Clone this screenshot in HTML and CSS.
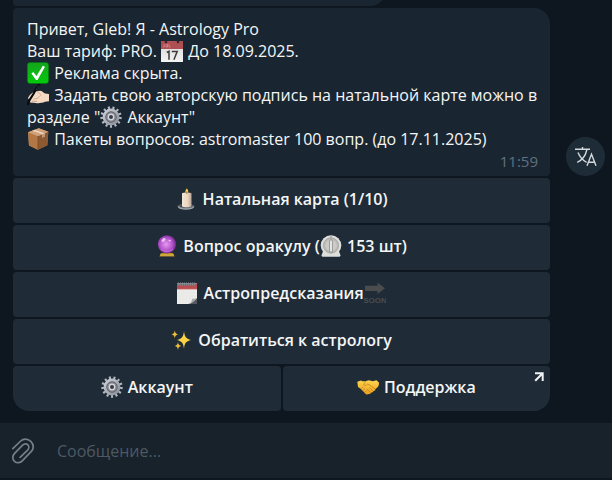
FILE: index.html
```html
<!DOCTYPE html>
<html lang="ru">

<head>
  <meta charset="UTF-8" />
  <title>Astrology Pro</title>
  <meta name="viewport" content="width=device-width, initial-scale=1.0" />
  <link rel="stylesheet" href="styles.css">
</head>

<body>

  <!-- shared icons -->
  <svg class="sprite" aria-hidden="true">
    <defs>
      <linearGradient id="gearFill" x1="0" y1="0" x2="1" y2="1">
        <stop offset="0" stop-color="#c9ced6" />
        <stop offset="1" stop-color="#8b8f99" />
      </linearGradient>
      <linearGradient id="paper" x1="0" y1="0" x2="0" y2="1">
        <stop offset="0" stop-color="#d5d5d5" />
        <stop offset="1" stop-color="#f4f4f4" />
      </linearGradient>
      <linearGradient id="check" x1="0" y1="0" x2="0" y2="1">
        <stop offset="0" stop-color="#14a51c" />
        <stop offset="1" stop-color="#04c90c" />
      </linearGradient>
      <linearGradient id="wax" x1="0" y1="0" x2="1" y2="0">
        <stop offset="0" stop-color="#f5e6d3" />
        <stop offset="0.6" stop-color="#ead5c0" />
        <stop offset="1" stop-color="#bba493" />
      </linearGradient>
      <radialGradient id="orb" cx="0.45" cy="0.5" r="0.55">
        <stop offset="0" stop-color="#e69af3" />
        <stop offset="0.65" stop-color="#b052c8" />
        <stop offset="1" stop-color="#702888" />
      </radialGradient>
      <linearGradient id="gold" x1="0" y1="0" x2="0" y2="1">
        <stop offset="0" stop-color="#ffd34e" />
        <stop offset="1" stop-color="#e9a01d" />
      </linearGradient>
    </defs>
    <symbol id="gear" viewBox="0 0 22 22">
      <circle cx="11" cy="11" r="9.3" fill="none" stroke="#b4b8c0" stroke-width="2.8" stroke-dasharray="2 2.495" />
      <circle cx="11" cy="11" r="6.8" fill="none" stroke="url(#gearFill)" stroke-width="3.2" />
      <circle cx="11" cy="11" r="5.3" fill="#85868f" />
      <circle cx="11" cy="11" r="5.3" fill="none" stroke="#5d616c" stroke-width="0.8" />
      <circle cx="11" cy="11" r="2.7" fill="#343b46" stroke="#d3d6dc" stroke-width="1.4" />
    </symbol>
  </svg>

  <main class="chat">
    <div class="message previous"></div>

    <div class="message-row">
      <article class="message bubble">
        <p>Привет, Gleb! Я - Astrology Pro</p>
        <p>Ваш тариф: PRO.
          <svg class="emoji" viewBox="0 0 22 22" aria-hidden="true">
            <rect x="0" y="1" width="22" height="21" rx="0.6" fill="url(#paper)" />
            <path d="M0 1h22v8H0z" fill="#ad4f53" />
            <path d="M1.8 7h1.4V4M5 4v3h1.5V4M8 4v3h1.5" fill="none" stroke="#d58b8d" stroke-width="0.8" />
            <circle cx="5" cy="2" r="1.3" fill="#3d2429" />
            <circle cx="17" cy="2" r="1.3" fill="#3d2429" />
            <path d="M5.8 12.5l2.2-1.3v8.600M10.800 11.500h5.400l-3.300 8.300" fill="none" stroke="#3c3c3e" stroke-width="1.5" />
          </svg>
          До 18.09.2025.</p>
        <p><svg class="emoji" viewBox="0 0 22 22" aria-hidden="true">
            <rect x="0.2" y="0.3" width="21.6" height="21.4" rx="3" fill="#028c0b" />
            <rect x="0.9" y="0.9" width="20.2" height="20" rx="2.5" fill="url(#check)" />
            <path d="M4.4 11.4l1.9-1.5 3.2 4 6.3-10.2 2.2 1.1-7.5 13.3H9z" fill="#fff" />
          </svg>
          Реклама скрыта.</p>
        <p><svg class="emoji" viewBox="0 0 22 22" aria-hidden="true">
            <path d="M1 14C2.5 11 5 8.500 8 7.500l5.500-.8c1.800.5 3.200 2.100 4.700 2.800l3.800.5v7.300l-4 .5c-3 1.400-6.500 1.700-9.500 1.200l-5.300-.4c-1.400-.4-1.500-1.400-.7-2z" fill="#f5d9c3" />
            <path d="M10 7.800c2.200.6 3.300 2 3.800 3.900M6.500 15.200l4.300-.9 1.800-2.300M5 17.300l5 .2" fill="none" stroke="#c89f88" stroke-width="0.8" />
            <path d="M12.900 0.500C10 2.500 8.600 6 6.700 9.500L2.600 16l-2.200 5" fill="none" stroke="#08090a" stroke-width="2.200" stroke-linejoin="round" />
            <path d="M12.200 1.400L8.800 6.200" fill="none" stroke="#4b5157" stroke-width="0.7" />
          </svg>
          Задать свою авторскую подпись на натальной карте можно в разделе "<svg class="emoji" aria-hidden="true"><use href="#gear" /></svg> Аккаунт"</p>
        <p><svg class="emoji" viewBox="0 0 22 22" aria-hidden="true">
            <path d="M1 4.2L11.8 0.2 21.3 3.8 20.3 17.2 10.8 21.8 2 17.5z" fill="#b98252" />
            <path d="M1 4.2L10.9 8.2 10.8 21.8 2 17.5z" fill="#b27744" />
            <path d="M10.9 8.2L21.3 3.8 20.3 17.2 10.8 21.8z" fill="#8d5930" />
            <path d="M1 4.2L11.8 0.2 21.3 3.8 10.9 8.2z" fill="#d0a079" />
            <path d="M5.2 2.7l2.7-1 10 3.7v3l-2.6 1.1V6.3z" fill="#e9d3bc" />
            <path d="M15.3 6.3l2.6-1v3.4l-2.6 1.1z" fill="#b99477" />
            <path d="M10.9 8.2v13.3" stroke="#70431f" stroke-width="0.5" />
          </svg>
          Пакеты вопросов: astromaster 100 вопр. (до 17.11.2025)</p>
        <time class="time">11:59</time>
      </article>

      <button class="translate" type="button" aria-label="Перевести">
        <svg viewBox="0 0 24 24" aria-hidden="true">
          <path d="M1 4.2h15M8.5 2v2.2M4 7.5c1.8 4.4 4.8 7.8 8.6 9.8M12.8 5c-1.3 5.7-4.6 10.1-9.6 12.3M13 20.8l4.5-11.6L22 20.8M14.4 17.2h6.2" />
        </svg>
      </button>

      <div class="keyboard">
        <button type="button"><svg class="emoji" viewBox="0 0 22 22" aria-hidden="true">
            <ellipse cx="11" cy="18.5" rx="8" ry="2.7" fill="#777f86" />
            <ellipse cx="11" cy="17.5" rx="7" ry="2" fill="#434c54" />
            <path d="M3 18.6c.3 3.4 15.7 3.4 16 0" fill="none" stroke="#b7bdc1" stroke-width="0.9" />
            <path d="M7 5.3c1-1 8.5-1 9.500 0v13c-1.500 1.400-8 1.400-9.500 0z" fill="url(#wax)" />
            <path d="M11.8 0.600c2.200 2.300 1.700 4.300 0 4.500-1.700-.4-2-2.100 0-4.500z" fill="#ffd247" />
            <path d="M11.800 3.500v2.300" stroke="#8d592a" stroke-width="0.8" />
          </svg> Натальная карта (1/10)</button>
        <button type="button"><svg class="emoji" viewBox="0 0 22 22" aria-hidden="true">
            <path d="M5 18h12l1.6 3.5H3.4z" fill="#b38a23" />
            <path d="M4.2 20h13.6" stroke="#e5c356" stroke-width="1" />
            <circle cx="11" cy="9.3" r="9.1" fill="url(#orb)" />
            <ellipse cx="7.5" cy="5" rx="2.3" ry="1.4" fill="#f3c4fa" transform="rotate(-40 7.5 5)" />
            <ellipse cx="13.7" cy="5.6" rx="1.2" ry="0.8" fill="#f0c5f7" />
            <path d="M5 14c3 3.2 8.7 3.2 12 0" fill="none" stroke="#cd72dc" stroke-width="1" />
          </svg> Вопрос оракулу (<svg class="emoji" viewBox="0 0 22 22" aria-hidden="true">
            <path d="M4 14h14l2.6 6.5c-.3 1-1 1.3-2 1.3H3.4c-1 0-1.7-.3-2-1.3z" fill="#dededc" />
            <circle cx="11" cy="10.5" r="10.3" fill="#dededc" />
            <circle cx="11" cy="10.5" r="7.7" fill="#b9b9b6" stroke="#979795" stroke-width="0.6" />
            <circle cx="11" cy="10.5" r="5.8" fill="#cbcbc8" />
            <rect x="9.6" y="5" width="2.8" height="12" rx="1" fill="#eeeeec" stroke="#777775" stroke-width="0.7" />
            <path d="M11 1.2v2" stroke="#777" stroke-width="0.8" />
          </svg> 153 шт)</button>
        <button type="button"><svg class="emoji" viewBox="0 0 22 22" aria-hidden="true">
            <rect x="1" y="1.4" width="20" height="20.6" fill="#ededeb" />
            <path d="M1 1.5h20V7H1z" fill="#b84e51" />
            <path d="M1 7.4h20" stroke="#d9a1a0" stroke-width="0.8" />
            <path d="M2 2h18" stroke="#81878c" stroke-width="3" stroke-dasharray="1 1" />
            <path d="M4 8v13.6M7 8v13.6M10 8v13.6M13 8v13.6M16 8v10M1.2 11h19.6M1.2 14h19.6M1.2 17h14" stroke="#dededc" stroke-width="0.4" />
            <path d="M12 22c4-.5 6-3.5 9-6v6z" fill="#55595d" />
            <path d="M12 22c4-1 3.5-4.5 4.8-5.6 1.2.7 2.8.4 4.2-.4-2 2.8-4.5 5.4-9 6z" fill="#aaa" />
          </svg> Астропредсказания<svg class="emoji" viewBox="0 0 22 22" aria-hidden="true">
            <path d="M1 3.700h12.500V0.500l7.500 5.800-7.500 5.800V8.900H1z" fill="#4b4c4d" />
            <text class="soon" x="11" y="20.5">SOON</text>
          </svg></button>
        <button type="button"><svg class="emoji" viewBox="0 0 22 22" aria-hidden="true">
            <path d="M13 2.2c.6 5.2 1.7 7.3 7 8.8-5.3 1.2-6.4 3.5-7 8.8-.6-5.3-1.8-7.6-7-8.8 5.2-1.5 6.4-3.6 7-8.8z" fill="#fbd445" />
            <path d="M3.8 1.2c.3 2.5.8 3.5 3.2 4.2-2.4.6-2.9 1.6-3.2 4.2C3.5 7 3 6 .6 5.4 3 4.700 3.5 3.7 3.8 1.2z" fill="#f0bf38" />
            <path d="M7 13c.3 2.3.8 3.2 3.2 4-2.4.7-2.9 1.6-3.2 4-.3-2.4-.8-3.3-3.2-4 2.4-.8 2.9-1.7 3.2-4z" fill="#f0bf38" />
          </svg> Обратиться к астрологу</button>
        <button type="button"><svg class="emoji" aria-hidden="true"><use href="#gear" /></svg> Аккаунт</button>
        <button type="button"><svg class="emoji" viewBox="0 0 22 22" aria-hidden="true">
            <path d="M0.3 5.8L4 4.4c1.5.8 3.2 1.3 5 .6l3-.7 3.800.9 3.700-.9 2.400 2.200c.3 2.200-.5 4-1.900 5.200l-1.600 1.200c0 1.500-1 2-1.900 2.200-.5 1.200-1.300 1.700-2.400 1.700-.6 1-1.500 1.500-2.600 1.300-1.300.9-2.600.4-3.700-1.100l-4.200-4.200L1 10.900z" fill="url(#gold)" />
            <path d="M8.9 5.2L6.5 8.8c1.6 1.2 3.3.4 4.3-.9 2.7 1.7 5 3.3 7.2 5M12.3 11.7l3.9 3.3M9.9 13l3.8 3.5M4.3 12.5l2-1.7M6 14.4l2-1.9M8 16.2l1.7-1.7" fill="none" stroke="#bb7718" stroke-width="0.7" />
          </svg> Поддержка
          <svg class="external" viewBox="0 0 10 10" aria-hidden="true">
            <path d="M1 1.3h7.7V9M8.7 1.3L1.2 8.8" />
          </svg></button>
      </div>
    </div>
  </main>

  <form class="composer">
    <button class="attach" type="button" aria-label="Прикрепить файл">
      <svg viewBox="0 0 24 28" aria-hidden="true">
        <path d="M1.8 11.6L9.7 4C12 1.7 16.5 1.2 19.8 4.4c3.3 3.3 3 7.5.5 10l-8.8 9.2c-2.3 2.5-5.7 2.9-8 .7-2.4-2.2-2.2-5.5.1-7.9l8-8.2c1.7-1.7 4.1-1.6 5.3-.3 1.3 1.3 1.2 3.6-.3 5.2L9.1 20.4" />
      </svg>
    </button>
    <input type="text" placeholder="Сообщение..." aria-label="Сообщение" />
  </form>

</body>

</html>
```
FILE: styles.css
```css
* {
  box-sizing: border-box;
}

body {
  margin: 0;
  height: 100vh;
  display: flex;
  flex-direction: column;
  font-family: "Open Sans", "Noto Sans", sans-serif;
  font-size: 16px;
  line-height: 22px;
  background-color: #0e1620;
  color: #f5f5f5;
}

button,
input {
  font: inherit;
  color: inherit;
  border: none;
}

button {
  cursor: pointer;
}

p {
  margin: 0;
}

.sprite {
  position: absolute;
  width: 0;
  height: 0;
}

.emoji {
  width: 22px;
  height: 22px;
  margin-right: 1px;
  vertical-align: top;
}

.chat {
  flex: 1;
  min-height: 0;
  overflow: hidden;
  display: flex;
  flex-direction: column;
  justify-content: flex-end;
  gap: 2px;
  padding: 0 7px 12px 13px;
}

.message {
  background-color: #192632;
}

.previous {
  flex: none;
  width: 63%;
  height: 44px;
  border-radius: 4px 16px 16px 4px;
}

.message-row {
  flex: none;
  display: grid;
  grid-template-columns: 1fr 39px;
  gap: 2px 16px;
}

.bubble {
  display: flex;
  flex-direction: column;
  padding: 10px 12px 4px 14px;
  border-radius: 4px 16px 4px 4px;
}

.time {
  align-self: flex-end;
  font-size: 15px;
  color: #61707f;
}

.translate {
  align-self: end;
  display: flex;
  align-items: center;
  justify-content: center;
  height: 39px;
  padding: 0;
  border-radius: 50%;
  background-color: #1e2c38;
}

.translate svg {
  width: 24px;
  height: 24px;
  fill: none;
  stroke: #d3d8dc;
  stroke-width: 1.4;
}

.keyboard {
  display: grid;
  grid-template-columns: 1fr 1fr;
  gap: 2px;
}

.keyboard button {
  position: relative;
  grid-column: span 2;
  padding: 10px 8px 13px;
  font-weight: 600;
  border-radius: 4px;
  background-color: #1f2c38;
}

.keyboard button:hover {
  background-color: #263542;
}

.keyboard button:nth-last-child(-n+2) {
  grid-column: span 1;
}

.keyboard button:nth-last-child(2) {
  border-bottom-left-radius: 16px;
}

.keyboard button:last-child {
  border-bottom-right-radius: 16px;
}

.soon {
  font-family: "Liberation Sans", sans-serif;
  font-size: 8px;
  font-weight: 700;
  text-anchor: middle;
  fill: #4b4c4d;
}

.external {
  position: absolute;
  top: 6px;
  right: 6px;
  width: 10px;
  height: 10px;
  fill: none;
  stroke: #f0f2f4;
  stroke-width: 2;
}

.composer {
  display: flex;
  align-items: center;
  gap: 22px;
  height: 55px;
  padding: 0 11px;
  margin-bottom: 2px;
  background-color: #18222b;
}

.attach {
  display: flex;
  padding: 0;
  background: none;
}

.attach svg {
  width: 24px;
  height: 28px;
  fill: none;
  stroke: #73808a;
  stroke-width: 1.7;
  stroke-linecap: round;
}

.composer input {
  flex: 1;
  min-width: 0;
  padding: 0;
  background: none;
  outline: none;
}

.composer input::placeholder {
  color: #4d5963;
  opacity: 1;
}
```
